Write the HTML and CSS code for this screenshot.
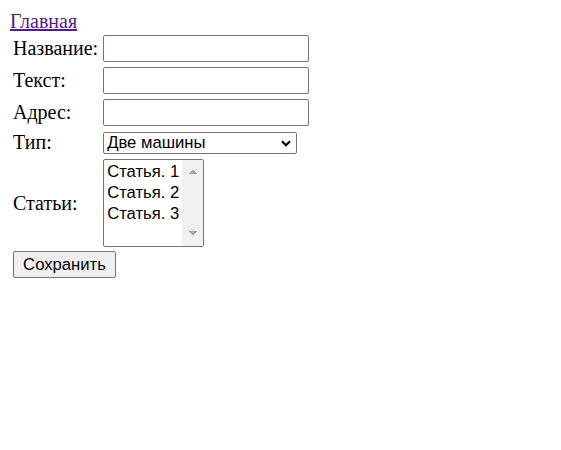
FILE: index.html
```html
<!DOCTYPE html>
<html>
<head>
<meta charset="utf-8">
<link rel="stylesheet" href="styles.css">
</head>
<body>
<a class="home" href="#">Главная</a>
<form class="form">
<table class="grid">
<tr><td class="label">Название:</td><td class="cell"><input type="text" class="field"></td></tr>
<tr><td class="label">Текст:</td><td class="cell"><input type="text" class="field"></td></tr>
<tr><td class="label">Адрес:</td><td class="cell"><input type="text" class="field"></td></tr>
<tr><td class="label">Тип:</td><td class="cell"><span class="choice-wrap"><select class="choice"><option>Две машины</option></select><svg class="chev" width="10" height="7" viewBox="0 0 10 7"><path d="M1 1.2 L5 5.2 L9 1.2" fill="none" stroke="#000" stroke-width="2.2"/></svg></span></td></tr>
<tr><td class="label">Статьи:</td><td class="cell">
<div class="listbox" role="listbox" aria-multiselectable="true">
<div class="opts">
<div class="opt" role="option">Статья. 1</div>
<div class="opt" role="option">Статья. 2</div>
<div class="opt" role="option">Статья. 3</div>
</div>
<div class="sbar">
<svg class="arr" width="10" height="5" viewBox="0 0 10 5"><path d="M0.5 5 L5 0.5 L9.5 5 Z" fill="#a3a3a3"/></svg>
<svg class="arr" width="10" height="5" viewBox="0 0 10 5"><path d="M0.5 0 L5 4.5 L9.5 0 Z" fill="#a3a3a3"/></svg>
</div>
</div>
</td></tr>
</table>
<div class="actions"><button type="button" class="save">Сохранить</button></div>
</form>
</body>
</html>
```

FILE: styles.css
```css
body {
  font-family: "Liberation Serif", "Times New Roman", serif;
  font-size: 20px;
  margin: 10px;
  color: #000;
}
.home { color: #551a8b; }
.form { margin: 0; }
.grid {
  border-spacing: 2px 3px;
  border-collapse: separate;
  margin-top: -2px;
}
.grid td { padding: 1px; }
.grid td.label { padding-right: 2px; }
.field, .choice, .opts, .save {
  font-family: "Liberation Sans", Arial, sans-serif;
  font-size: 16.667px;
  color: #000;
  margin: 0;
}
.field {
  box-sizing: border-box;
  width: 206px;
  height: 27px;
  border: 1px solid #767676;
  border-radius: 2px;
  padding: 1px 2px;
  display: block;
  background: #fff;
}
.choice-wrap {
  position: relative;
  display: block;
  width: 194px;
}
.choice {
  box-sizing: border-box;
  width: 194px;
  height: 22px;
  display: block;
  appearance: none;
  -webkit-appearance: none;
  border: 1px solid #767676;
  border-radius: 2px;
  background: #fff;
  padding: 0 0 0 3px;
  line-height: 20px;
}
.chev {
  position: absolute;
  right: 6px;
  top: 8px;
  pointer-events: none;
}
.listbox {
  box-sizing: border-box;
  width: 101px;
  height: 88px;
  border: 1px solid #767676;
  border-radius: 2px;
  display: flex;
  background: #fff;
  overflow: hidden;
}
.opts {
  flex: 1;
  padding-top: 1px;
}
.opt {
  height: 21px;
  line-height: 21px;
  padding-left: 3px;
  white-space: nowrap;
}
.sbar {
  width: 21px;
  background: #f0f0f0;
  display: flex;
  flex-direction: column;
  justify-content: space-between;
  align-items: center;
  padding: 9px 0 10px;
  box-sizing: border-box;
}
.arr { display: block; }
.actions { padding-left: 3px; }
.save {
  box-sizing: border-box;
  height: 27px;
  width: 103px;
  padding: 0 8px;
  border: 1px solid #767676;
  border-radius: 2px;
  background: #efefef;
}
```
